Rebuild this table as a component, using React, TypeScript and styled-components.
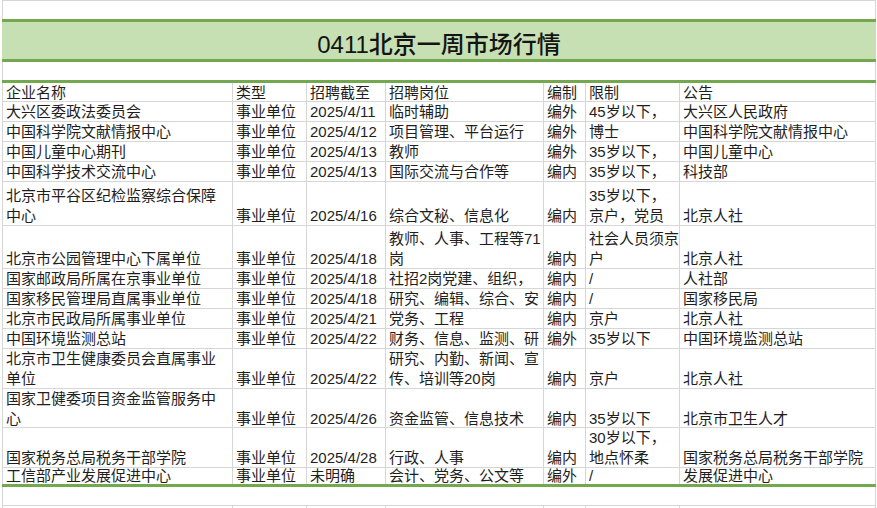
import React from "react";
import styled, { createGlobalStyle } from "styled-components";

const GRID = "#d6d6d6";
const GREEN = "#74a84f";
const FILL = "#c6e0b4";

const GlobalStyle = createGlobalStyle`
  body {
    margin: 0;
    background: #fff;
    font-family: "Liberation Sans", "Noto Sans CJK SC", sans-serif;
    color: #1e1e1e;
  }
`;

const Sheet = styled.div`
  width: 874px;
  margin-left: 2px;
  box-sizing: border-box;
  border-top: 1px solid ${GRID};
  border-left: 1px solid ${GRID};
  border-right: 1px solid ${GRID};
  display: flex;
  flex-direction: column;
`;

const Blank = styled.div<{ $h: number; $line?: boolean }>`
  height: ${(p) => p.$h}px;
  box-sizing: border-box;
  border-bottom: ${(p) => (p.$line ? `1px solid ${GRID}` : "none")};
`;

const TitleBand = styled.div`
  height: 43px;
  box-sizing: border-box;
  border-top: 3px solid ${GREEN};
  border-bottom: 3px solid ${GREEN};
  margin: 0 -1px;
  background: ${FILL};
  display: flex;
  align-items: flex-end;
  justify-content: center;
`;

const Title = styled.h1`
  margin: 0;
  font-size: 24px;
  font-weight: 500;
  line-height: 28px;
  color: #141414;
`;

const Row = styled.div<{ $h: number; $top?: boolean; $bottom?: boolean }>`
  display: grid;
  grid-template-columns: 230px 74px 79px 158px 42px 94px 195px;
  height: ${(p) => p.$h}px;
  box-sizing: border-box;
  border-top: ${(p) => (p.$top ? `3px solid ${GREEN}` : "none")};
  border-bottom: ${(p) => (p.$bottom ? `3px solid ${GREEN}` : `1px solid ${GRID}`)};
  margin: ${(p) => (p.$top || p.$bottom ? "0 -1px" : "0")};
  padding: ${(p) => (p.$top || p.$bottom ? "0 1px" : "0")};
`;

const Cell = styled.div<{ $tight?: boolean }>`
  display: flex;
  flex-direction: column;
  justify-content: flex-end;
  box-sizing: border-box;
  padding: 0 0 0 3px;
  border-right: 1px solid ${GRID};
  overflow-x: clip;
  overflow-y: visible;
  white-space: pre;
  font-size: 15px;
  line-height: ${(p) => (p.$tight ? "16px" : "19.5px")};

  &:last-child {
    border-right: none;
  }
`;

type Rec = { h: number; cells: string[] };

const header = ["企业名称", "类型", "招聘截至", "招聘岗位", "编制", "限制", "公告"];

const rows: Rec[] = [
  { h: 20, cells: ["大兴区委政法委员会", "事业单位", "2025/4/11", "临时辅助", "编外", "45岁以下，", "大兴区人民政府"] },
  { h: 20, cells: ["中国科学院文献情报中心", "事业单位", "2025/4/12", "项目管理、平台运行", "编外", "博士", "中国科学院文献情报中心"] },
  { h: 20, cells: ["中国儿童中心期刊", "事业单位", "2025/4/13", "教师", "编外", "35岁以下，", "中国儿童中心"] },
  { h: 20, cells: ["中国科学技术交流中心", "事业单位", "2025/4/13", "国际交流与合作等", "编内", "35岁以下，", "科技部"] },
  { h: 44, cells: ["北京市平谷区纪检监察综合保障\n中心", "事业单位", "2025/4/16", "综合文秘、信息化", "编内", "35岁以下，\n京户，党员", "北京人社"] },
  { h: 43, cells: ["北京市公园管理中心下属单位", "事业单位", "2025/4/18", "教师、人事、工程等71\n岗", "编内", "社会人员须京\n户", "北京人社"] },
  { h: 20, cells: ["国家邮政局所属在京事业单位", "事业单位", "2025/4/18", "社招2岗党建、组织，", "编内", "/", "人社部"] },
  { h: 20, cells: ["国家移民管理局直属事业单位", "事业单位", "2025/4/18", "研究、编辑、综合、安", "编内", "/", "国家移民局"] },
  { h: 20, cells: ["北京市民政局所属事业单位", "事业单位", "2025/4/21", "党务、工程", "编内", "京户", "北京人社"] },
  { h: 20, cells: ["中国环境监测总站", "事业单位", "2025/4/22", "财务、信息、监测、研", "编外", "35岁以下", "中国环境监测总站"] },
  { h: 40, cells: ["北京市卫生健康委员会直属事业\n单位", "事业单位", "2025/4/22", "研究、内勤、新闻、宣\n传、培训等20岗", "编内", "京户", "北京人社"] },
  { h: 39, cells: ["国家卫健委项目资金监管服务中\n心", "事业单位", "2025/4/26", "资金监管、信息技术", "编内", "35岁以下", "北京市卫生人才"] },
  { h: 40, cells: ["国家税务总局税务干部学院", "事业单位", "2025/4/28", "行政、人事", "编内", "30岁以下，\n地点怀柔", "国家税务总局税务干部学院"] },
];

const lastRow: Rec = {
  h: 19,
  cells: ["工信部产业发展促进中心", "事业单位", "未明确", "会计、党务、公文等", "编外", "/", "发展促进中心"],
};

function CellRow({ rec, tight, ...rest }: { rec: Rec; tight?: boolean; $top?: boolean; $bottom?: boolean }) {
  return (
    <Row $h={rec.h} {...rest}>
      {rec.cells.map((text, i) => (
        <Cell key={i} $tight={tight}>
          {text}
        </Cell>
      ))}
    </Row>
  );
}

export default function App() {
  return (
    <>
      <GlobalStyle />
      <Sheet>
        <Blank $h={18} />
        <TitleBand>
          <Title>0411北京一周市场行情</Title>
        </TitleBand>
        <Blank $h={18} />
        <CellRow rec={{ h: 22, cells: header }} $top />
        {rows.map((rec, i) => (
          <CellRow rec={rec} key={i} />
        ))}
        <CellRow rec={lastRow} tight $bottom />
        <Blank $h={19} $line />
        <CellRow rec={{ h: 10, cells: ["", "", "", "", "", "", ""] }} />
      </Sheet>
    </>
  );
}
